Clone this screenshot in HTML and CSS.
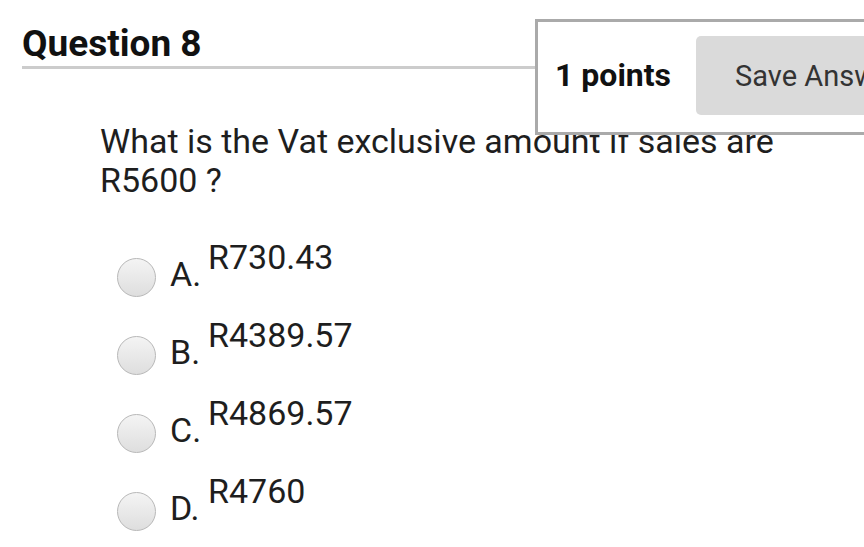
FILE: index.html
```html
<!DOCTYPE html>
<html>
<head>
<meta charset="utf-8">
<link rel="stylesheet" href="styles.css">
</head>
<body>
<div class="page">
  <div class="header">
    <h2 class="title">Question 8</h2>
  </div>
  <div class="points-box">
    <span class="points">1 points</span>
    <button class="save">Save Answer</button>
  </div>
  <p class="question">What is the Vat exclusive amount if sales are<br>R5600 ?</p>
  <div class="options">
    <div class="option"><span class="radio"></span><span class="letter">A.</span><span class="answer">R730.43</span></div>
    <div class="option"><span class="radio"></span><span class="letter">B.</span><span class="answer">R4389.57</span></div>
    <div class="option"><span class="radio"></span><span class="letter">C.</span><span class="answer">R4869.57</span></div>
    <div class="option"><span class="radio"></span><span class="letter">D.</span><span class="answer">R4760</span></div>
  </div>
</div>
</body>
</html>
```
FILE: styles.css
```css
html, body {
  margin: 0;
  padding: 0;
  background: #ffffff;
  overflow: hidden;
}
body {
  width: 864px;
  height: 547px;
  font-family: Roboto, "Liberation Sans", sans-serif;
  color: #1e1e1e;
}
.page {
  position: relative;
  width: 864px;
  height: 547px;
  overflow: hidden;
}
.header {
  margin-left: 22px;
  padding-top: 20px;
  height: 46px;
  border-bottom: 3px solid #cccccc;
}
.title {
  margin: 0;
  font-size: 37px;
  line-height: 48px;
  font-weight: 700;
  color: #111111;
}
.points-box {
  position: absolute;
  left: 535px;
  top: 19px;
  width: 360px;
  height: 110px;
  border: 3px solid #aaaaaa;
  background: #ffffff;
  display: flex;
  align-items: flex-start;
}
.points {
  flex: none;
  white-space: nowrap;
  margin-left: 17px;
  margin-top: 33px;
  font-size: 32px;
  line-height: 40px;
  font-weight: 700;
  color: #111111;
}
.save {
  flex: none;
  margin-left: 25px;
  margin-top: 14px;
  height: 79px;
  padding: 0 0 0 39px;
  border: none;
  border-radius: 5px;
  background: #dadada;
  font-family: Roboto, "Liberation Sans", sans-serif;
  font-size: 29px;
  color: #333333;
  white-space: nowrap;
  text-align: left;
  width: 220px;
}
.question {
  margin: 0;
  padding-left: 100px;
  padding-top: 53px;
  font-size: 34px;
  line-height: 39px;
  color: #1e1e1e;
}
.options {
  padding-top: 38px;
  padding-left: 117px;
}
.option {
  display: flex;
  align-items: flex-start;
  height: 78px;
}
.radio {
  width: 37px;
  height: 37px;
  margin-top: 20px;
  border-radius: 50%;
  border: 1.5px solid #b8b8b8;
  background: linear-gradient(#f4f4f4, #dedede);
  flex: none;
}
.letter {
  margin-left: 14px;
  margin-top: 17px;
  width: 38px;
  font-size: 34px;
  line-height: 39px;
}
.answer {
  margin-top: 0;
  font-size: 34px;
  line-height: 39px;
}
```
